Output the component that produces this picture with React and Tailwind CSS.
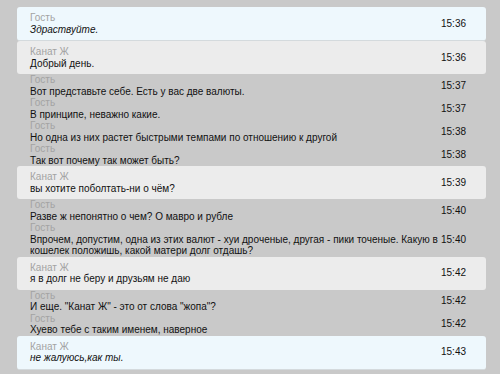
const messages = [
  { from: "Гость", text: "Здраствуйте.", time: "15:36", box: "blue", italic: true },
  { from: "Канат Ж", text: "Добрый день.", time: "15:36", box: "gray" },
  { from: "Гость", text: "Вот представьте себе. Есть у вас две валюты.", time: "15:37" },
  { from: "Гость", text: "В принципе, неважно какие.", time: "15:37" },
  { from: "Гость", text: "Но одна из них растет быстрыми темпами по отношению к другой", time: "15:38" },
  { from: "Гость", text: "Так вот почему так может быть?", time: "15:38" },
  { from: "Канат Ж", text: "вы хотите поболтать-ни о чём?", time: "15:39", box: "gray" },
  { from: "Гость", text: "Разве ж непонятно о чем? О мавро и рубле", time: "15:40" },
  {
    from: "Гость",
    text: "Впрочем, допустим, одна из этих валют - хуи дрoченые, другая - пики точеные. Какую в кошелек положишь, какой матери долг отдашь?",
    time: "15:40",
  },
  { from: "Канат Ж", text: "я в долг не беру и друзьям не даю", time: "15:42", box: "gray" },
  { from: "Гость", text: "И еще. \"Канат Ж\" - это от слова \"жопа\"?", time: "15:42" },
  { from: "Гость", text: "Хуево тебе с таким именем, наверное", time: "15:42" },
  { from: "Канат Ж", text: "не жалуюсь,как ты.", time: "15:43", box: "blue", italic: true },
];

function Row({ msg }) {
  const boxClass =
    msg.box === "blue"
      ? "bg-[#eef8fd] rounded-[3px] py-[5px] border-b border-[#d4dadd]"
      : msg.box === "gray"
      ? "bg-[#ececec] rounded-[3px] py-[5px]"
      : "";

  return (
    <div className={`flex items-center ${boxClass}`}>
      <div className="flex-1 pl-[13px] pr-[1px]">
        <div className="text-[#a3a3a3]">{msg.from}</div>
        <div className={msg.italic ? "italic text-[#111]" : "text-[#111]"}>
          {msg.text}
        </div>
      </div>
      <div className="w-[45px] shrink-0 text-[#111]">{msg.time}</div>
    </div>
  );
}

export default function App() {
  return (
    <div
      className="w-[500px] h-[374px] bg-[#c9c9c9] pl-[17px] pr-[14px] pt-[7px] text-[10px] leading-[11.5px]"
      style={{ fontFamily: '"Liberation Sans", Arial, sans-serif' }}
    >
      <div className="flex flex-col">
        {messages.map((msg, index) => (
          <Row key={index} msg={msg} />
        ))}
      </div>
    </div>
  );
}
